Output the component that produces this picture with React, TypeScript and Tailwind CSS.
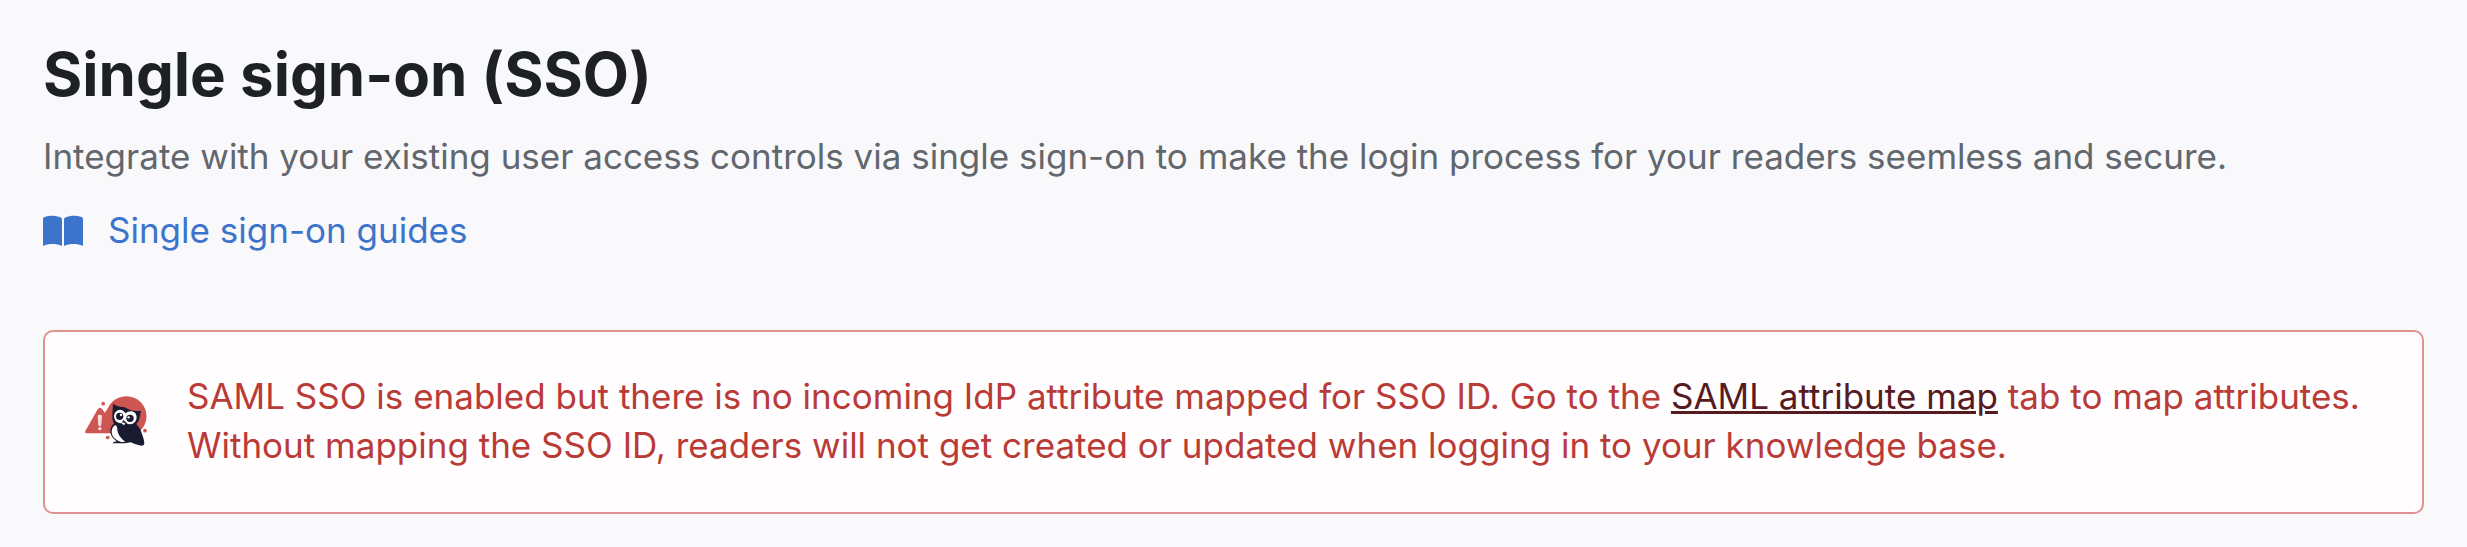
function BookIcon() {
  return (
    <svg viewBox="0 0 40 32" className="h-8 w-10 shrink-0" fill="currentColor" aria-hidden="true">
      <path d="M0 4.2Q0 2.6 1.5 2C7 0 13 .4 17.800 2.600Q19 3.200 19 4.600V31C13 28.400 6 28.400 0 31Z" />
      <path d="M40 4.200Q40 2.600 38.500 2C33 0 27 .4 22.200 2.600Q21 3.200 21 4.600V31C27 28.400 34 28.400 40 31Z" />
    </svg>
  );
}

function OwlWarning() {
  return (
    <svg viewBox="45 48 186 150" className="h-[50px] w-[62px] shrink-0" aria-hidden="true">
      <g fill="#cd5652">
        <circle cx="169" cy="109" r="60.500" />
        <path d="M46 153L83 88Q90 78 97 88L104 98L115 84L140 90V160H51Q43 159 46 153Z" />
        <circle cx="99.500" cy="71" r="5.500" />
        <circle cx="113" cy="172.500" r="5.500" />
      </g>
      <path d="M205 197L231 145V197Z" fill="#fffdfd" />
      <circle cx="225" cy="152" r="5.500" fill="#cd5652" />
      <path d="M83 108Q83 104 89.500 104Q96 104 96 108L94 135Q93 139 89.500 139Q86 139 85 135Z" fill="#f6dcdd" />
      <circle cx="89.500" cy="146" r="5" fill="#f6dcdd" />
      <path
        d="M129 71Q140 79 152 80Q164 80 174 87Q186 95 213 92Q211 99 210 108Q208 123 199 132Q211 144 216 162Q223 181 223 191Q222 197 214 197Q197 195 182 187Q174 189 164 190H127Q130 186 140 184Q124 174 121 157Q120 139 132 131Q126 122 127 107Q128 85 129 71Z"
        fill="#191b30"
      />
      <path d="M136 135Q143 139 142 151Q144 169 166 186Q148 188 136 177Q125 167 125 155Q125 142 136 135Z" fill="#fffdfd" />
      <path d="M149 89Q161 90 166 100Q174 93 185 94Q200 97 200 113Q198 131 181 133Q171 133 166 125Q158 131 147 129Q132 124 132 108Q134 91 149 89Z" fill="#fffdfd" />
      <circle cx="149" cy="109" r="11" fill="#191b30" />
      <circle cx="180" cy="115" r="11" fill="#191b30" />
      <circle cx="153" cy="105" r="3.500" fill="#fffdfd" />
      <circle cx="176" cy="112" r="3.500" fill="#fffdfd" />
      <path d="M160 120L167 126L158 132Q154 126 160 120Z" fill="#191b30" />
      <path d="M155 130Q159 124 166 131L161 136Z" fill="#fffdfd" />
    </svg>
  );
}

export default function App() {
  return (
    <main className="min-h-screen bg-[#f9f9fb] px-[43px] pt-[39px] font-['Inter',sans-serif] text-[35px] leading-[49px] [font-variant-ligatures:none]">
      <h1 className="text-[60px] leading-[70px] font-bold text-[#1d2125]">Single sign-on (SSO)</h1>
      <p className="mt-[23px] text-[#62666d]">
        Integrate with your existing user access controls via single sign-on to make the login process for your readers
        seemless and secure.
      </p>
      <a href="#guides" className="mt-[25px] flex w-fit items-center gap-[25px] text-[#3d74cb]">
        <BookIcon />
        Single sign-on guides
      </a>
      <section
        role="alert"
        className="mt-[75px] flex items-center gap-10 rounded-[10px] border-2 border-[#dd9390] bg-[#fffdfd] px-10 pt-10 pb-[42px] text-[#b93a36]"
      >
        <OwlWarning />
        <p>
          SAML SSO is enabled but there is no incoming IdP attribute mapped for SSO ID. Go to the{" "}
          <a href="#attribute-map" className="text-[#571a21] underline decoration-[3px] underline-offset-2">
            SAML attribute map
          </a>{" "}
          tab to map attributes. Without mapping the SSO ID, readers will not get created or updated when logging in to
          your knowledge base.
        </p>
      </section>
    </main>
  );
}
